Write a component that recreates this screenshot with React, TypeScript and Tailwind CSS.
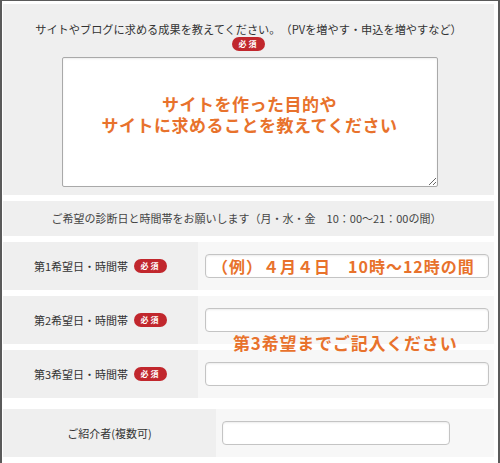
import React from "react";

const ORANGE = "text-[#e8722c]";

function Badge() {
  return (
    <span className="inline-flex h-[14px] w-[33px] items-center justify-center rounded-full bg-[#c1272d] text-[8px] font-bold leading-none tracking-[2px] text-white">
      必須
    </span>
  );
}

function Row({ label, children }: { label: string; children?: React.ReactNode }) {
  return (
    <div className="flex h-[48px]">
      <div className="flex w-[195px] items-center justify-center gap-[6px] bg-[#efefef] text-[11px] text-[#333]">
        <span>{label}</span>
        <Badge />
      </div>
      <div className="flex flex-1 items-center bg-[#f7f7f7] pl-[7px] pr-[5px]">{children}</div>
    </div>
  );
}

const inputCls =
  "h-[24px] w-full rounded-[4px] border border-[#c4c4c4] bg-white shadow-[inset_0_1px_2px_rgba(0,0,0,0.08)] outline-none";

export default function App() {
  return (
    <div
      className="min-h-[463px] border-x-2 border-t border-[#5a5a5a] bg-white pl-[1px] pr-[4px] pt-[3px]"
      style={{ fontFamily: '"Noto Sans CJK JP", "Noto Sans", sans-serif' }}
    >
      <div className="flex flex-col gap-[6px]">
        {/* goal panel */}
        <div className="flex h-[191px] flex-col items-center bg-[#efefef] pt-[17px]">
          <p className="text-[11.2px] leading-[17px] text-[#333] [text-spacing-trim:space-all]">
            サイトやブログに求める成果を教えてください。（PVを増やす・申込を増やすなど）
          </p>
          <div className="mt-[-1px] flex">
            <Badge />
          </div>
          <div className="relative mt-[6px] ml-[2px]">
            <textarea
              className="block h-[130px] w-[376px] resize rounded-[2px] border border-[#a9a9a9] bg-white shadow-[inset_0_1px_2px_rgba(0,0,0,0.08)] outline-none"
              readOnly
            />
            <div
              className={`pointer-events-none absolute inset-x-0 top-[36px] text-center text-[17px] font-bold leading-[21px] tracking-[0.5px] ${ORANGE}`}
            >
              サイトを作った目的や
              <br />
              サイトに求めることを教えてください
            </div>
          </div>
        </div>

        {/* schedule note */}
        <div className="flex h-[35px] items-center justify-center bg-[#efefef] pr-[4px] text-[11px] text-[#444] [text-spacing-trim:space-all]">
          ご希望の診断日と時間帯をお願いします（月・水・金　10：00〜21：00の間）
        </div>

        <div className="relative flex flex-col gap-[6px]">
          <Row label="第1希望日・時間帯">
            <input
              className={`${inputCls} pl-[6px] text-[16px] font-bold tracking-[1px] ${ORANGE}`}
              defaultValue="（例）４月４日　10時〜12時の間"
              readOnly
            />
          </Row>
          <Row label="第2希望日・時間帯">
            <input className={inputCls} readOnly />
          </Row>
          <Row label="第3希望日・時間帯">
            <input className={inputCls} readOnly />
          </Row>
          <div
            className={`pointer-events-none absolute left-[230px] top-[91px] text-[17px] font-bold leading-[20px] tracking-[0.8px] ${ORANGE}`}
          >
            第3希望までご記入ください
          </div>
        </div>

        <div className="mt-[5px] flex h-[48px]">
          <div className="flex w-[213px] items-center justify-center bg-[#efefef] text-[11px] text-[#333]">
            ご紹介者(複数可)
          </div>
          <div className="flex flex-1 items-center bg-[#f7f7f7] pl-[6px]">
            <input className={`${inputCls} !w-[228px]`} readOnly />
          </div>
        </div>
      </div>
    </div>
  );
}
